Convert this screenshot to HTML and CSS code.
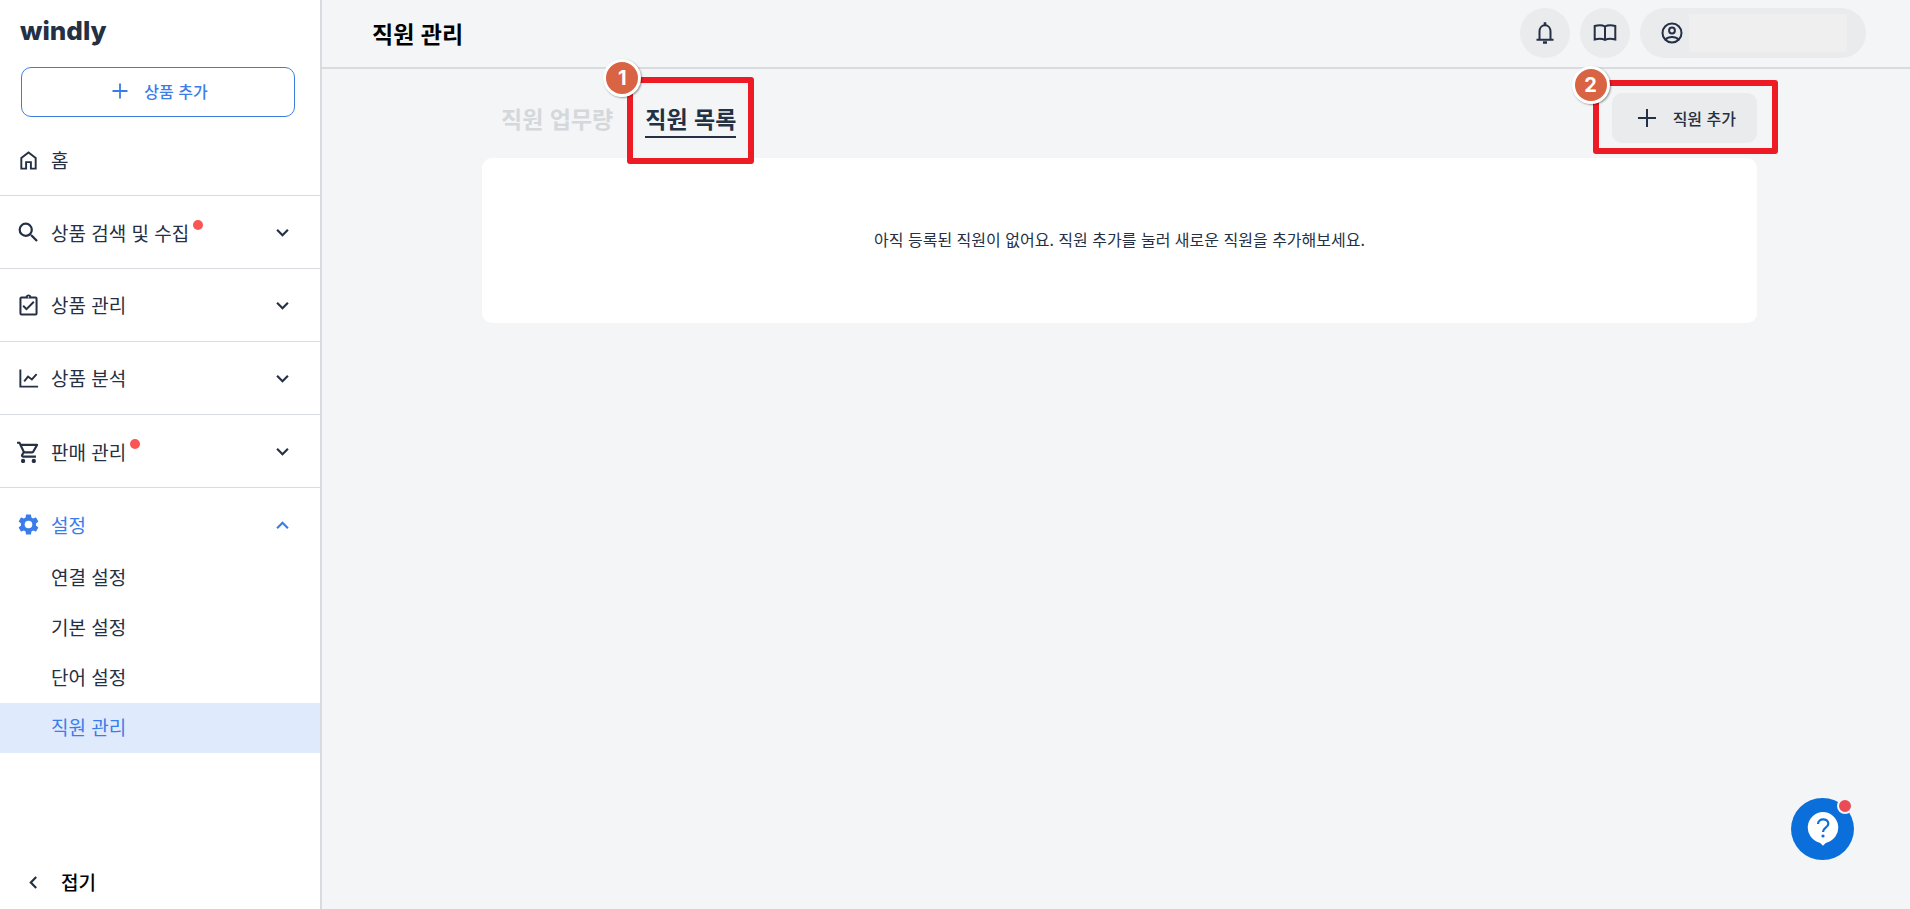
FILE: index.html
```html
<!DOCTYPE html>
<html lang="ko">
  <head>
    <meta charset="UTF-8" />
    <meta name="viewport" content="width=device-width, initial-scale=1.0" />
    <title>직원 관리</title>
    <link rel="stylesheet" href="styles.css">
  </head>
  <body>
    <div class="layout">
      <aside class="sidebar">
        <a class="logo" href="#">windly</a>
        <button class="add-product" type="button">
          <svg width="16" height="16" viewBox="0 0 16 16"><path d="M8 0.5v15M0.5 8h15" fill="none" stroke="currentColor" stroke-width="1.8" /></svg>
          상품 추가
        </button>

        <nav class="menu">
          <a class="menu-item home" href="#">
            <svg class="icon" viewBox="0 0 24 24"><path d="M4.5 20.5V9.3L12 3.6l7.5 5.7v11.2h-5v-6.8h-5v6.8z" fill="none" stroke="currentColor" stroke-width="2" /></svg>
            <span>홈</span>
          </a>
          <button class="menu-item" type="button">
            <svg class="icon" viewBox="0 0 24 24"><path d="M15.5 14h-.79l-.28-.27A6.47 6.47 0 0 0 16 9.5 6.5 6.5 0 1 0 9.5 16c1.61 0 3.09-.59 4.23-1.57l.27.28v.79l5 4.99L20.49 19zm-6 0a4.500 4.500 0 1 1 0-9 4.500 4.500 0 0 1 0 9z" transform="translate(-1.8 -1.8) scale(1.15)" /></svg>
            <span>상품 검색 및 수집<i class="new-dot"></i></span>
            <svg class="arrow" viewBox="0 0 12 12"><path d="M1 3.500l5 5 5-5" /></svg>
          </button>
          <button class="menu-item" type="button">
            <svg class="icon" viewBox="0 0 24 24"><path d="M19 3h-4.180C14.400 1.840 13.300 1 12 1s-2.400.840-2.820 2H5a2 2 0 0 0-2 2v15a2 2 0 0 0 2 2h14a2 2 0 0 0 2-2V5a2 2 0 0 0-2-2zm-7-.250a.750.750 0 1 1 0 1.500.750.750 0 0 1 0-1.500zM19 20H5V5h14zM18 9l-1.400-1.400-6.600 6.600-2.600-2.600L6 13l4 4z" transform="translate(-.6 -.6) scale(1.05)" /></svg>
            <span>상품 관리</span>
            <svg class="arrow" viewBox="0 0 12 12"><path d="M1 3.500l5 5 5-5" /></svg>
          </button>
          <button class="menu-item" type="button">
            <svg class="icon" viewBox="0 0 24 24"><path d="M3.500 2.500v18H22M7.500 15l4-5 4 3 5-5.500" fill="none" stroke="currentColor" stroke-width="2" /></svg>
            <span>상품 분석</span>
            <svg class="arrow" viewBox="0 0 12 12"><path d="M1 3.500l5 5 5-5" /></svg>
          </button>
          <button class="menu-item" type="button">
            <svg class="icon" viewBox="0 0 24 24"><path d="M15.550 13c.750 0 1.410-.410 1.750-1.030l3.580-6.490A.996.996 0 0 0 20.010 4H5.210l-.940-2H1v2h2l3.600 7.590-1.350 2.440C4.520 15.370 5.480 17 7 17h12v-2H7l1.100-2zM6.160 6h12.150l-2.760 5H8.530zM7 18a2 2 0 1 0 0 4 2 2 0 0 0 0-4zm10 0a2 2 0 1 0 0 4 2 2 0 0 0 0-4z" transform="translate(-1.5 -.5) scale(1.12)" /></svg>
            <span>판매 관리<i class="new-dot"></i></span>
            <svg class="arrow" viewBox="0 0 12 12"><path d="M1 3.500l5 5 5-5" /></svg>
          </button>
          <button class="menu-item open" type="button">
            <svg class="icon" viewBox="0 0 24 24"><path d="M19.430 12.980c.040-.320.070-.640.070-.980s-.030-.660-.070-.980l2.110-1.650c.190-.150.240-.420.120-.640l-2-3.460c-.120-.220-.390-.300-.610-.220l-2.490 1c-.520-.400-1.080-.730-1.690-.980l-.380-2.650A.488.488 0 0 0 14 2h-4c-.250 0-.460.180-.490.420l-.380 2.650c-.610.250-1.170.590-1.690.980l-2.490-1c-.230-.090-.490 0-.610.220l-2 3.460c-.130.220-.070.490.120.640l2.110 1.650c-.040.320-.070.650-.070.980s.030.660.070.980l-2.110 1.650c-.190.150-.240.420-.120.640l2 3.460c.120.220.390.300.610.220l2.490-1c.520.400 1.080.730 1.690.980l.380 2.650c.030.240.240.420.490.420h4c.250 0 .460-.180.490-.420l.380-2.650c.610-.250 1.170-.590 1.690-.980l2.490 1c.230.090.490 0 .610-.220l2-3.460c.120-.220.070-.490-.120-.640zM12 15.800a3.800 3.800 0 1 1 0-7.600 3.800 3.800 0 0 1 0 7.600z" transform="translate(-.6 -.6) scale(1.05)" /></svg>
            <span>설정</span>
            <svg class="arrow" viewBox="0 0 12 12"><path d="M1 8.500l5-5 5 5" /></svg>
          </button>
          <ul class="submenu">
            <li><a href="#">연결 설정</a></li>
            <li><a href="#">기본 설정</a></li>
            <li><a href="#">단어 설정</a></li>
            <li><a class="active" href="#">직원 관리</a></li>
          </ul>
        </nav>

        <button class="fold" type="button">
          <svg class="arrow" viewBox="0 0 12 12"><path d="M8.500 1l-5 5 5 5" /></svg>
          접기
        </button>
      </aside>

      <div class="page">
        <header class="header">
          <h1>직원 관리</h1>
          <div class="header-btns">
            <button class="round-btn" type="button" aria-label="알림">
              <svg width="24" height="24" viewBox="0 0 24 24" fill="none" stroke="currentColor" stroke-width="2"><path d="M6.500 18.500V10.500C6.500 7 8.700 4.300 12 4.300s5.500 2.700 5.500 6.200v8M3.500 18.700h17" /><path d="M12 1.300v3M10 21.500h4" stroke-width="2.600" /></svg>
            </button>
            <button class="round-btn" type="button" aria-label="가이드">
              <svg width="24" height="24" viewBox="0 0 24 24" fill="none" stroke="currentColor" stroke-width="2"><path d="M12 5.500C9.500 4 5 4 1.700 5v13.500c3.300-1 7.800-1 10.300.5 2.500-1.500 7-1.500 10.300-.5V5C19 4 14.500 4 12 5.500zv13.500" /></svg>
            </button>
            <button class="account" type="button" aria-label="내 계정">
              <svg width="22" height="22" viewBox="0 0 22 22" fill="none" stroke="currentColor" stroke-width="2"><circle cx="11" cy="11" r="9.500" /><circle cx="11" cy="8.500" r="2.900" /><path d="M4.500 17.500c3-3.400 10-3.400 13 0" /></svg>
              <span class="account-name"></span>
            </button>
          </div>
        </header>

        <main class="content">
          <div class="toolbar">
            <div class="tabs">
              <a class="tab" href="#">직원 업무량</a>
              <div class="step">
                <a class="tab current" href="#">직원 목록</a>
                <div class="mark mark-tab"><b>1</b></div>
              </div>
            </div>
            <div class="step">
              <button class="add-staff" type="button">
                <svg width="18" height="18" viewBox="0 0 18 18"><path d="M9 0v18M0 9h18" fill="none" stroke="currentColor" stroke-width="2" /></svg>
                직원 추가
              </button>
              <div class="mark mark-add"><b>2</b></div>
            </div>
          </div>
          <section class="card">
            <p>아직 등록된 직원이 없어요. 직원 추가를 눌러 새로운 직원을 추가해보세요.</p>
          </section>
        </main>
      </div>
    </div>

    <!-- help chat -->
    <button class="help" type="button" aria-label="도움말">
      <svg width="32" height="36" viewBox="0 0 32 36"><path d="M16 1a15.500 15.500 0 0 0-4 30.400c1.600.500 2.600 1.800 4 3.400 1.400-1.600 2.400-2.900 4-3.400A15.500 15.500 0 0 0 16 1z" fill="#fff" /><path d="M11 13c0-6.200 10.300-6 10.300-.300 0 4.300-5.300 3.700-5.300 8.300" fill="none" stroke="#0b6fdb" stroke-width="2.200" /><circle cx="16" cy="25" r="1.600" fill="#0b6fdb" /></svg>
      <i class="help-dot"></i>
    </button>
  </body>
</html>
```
FILE: styles.css
```css
* {
  margin: 0;
  padding: 0;
  box-sizing: border-box;
}
body {
  font-family: "Noto Sans CJK KR", sans-serif;
  font-size: 19px;
  line-height: 24px;
  color: #243044;
  background-color: #f3f5f7;
}
button {
  font: inherit;
  color: inherit;
  border: none;
  background: none;
  cursor: pointer;
}
a {
  color: inherit;
  text-decoration: none;
}
ul {
  list-style: none;
}
svg {
  flex-shrink: 0;
}
.layout {
  display: flex;
  min-height: 100vh;
}

/* sidebar */
.sidebar {
  display: flex;
  flex-direction: column;
  flex-shrink: 0;
  width: 322px;
  background-color: #fff;
  border-right: 2px solid #d8dce0;
}
.logo {
  padding: 15px 20px 20px;
  font-family: Inter, sans-serif;
  font-size: 26px;
  font-weight: 800;
  line-height: 32px;
}
.add-product {
  display: flex;
  align-items: center;
  justify-content: center;
  gap: 16px;
  height: 50px;
  margin: 0 25px 0 21px;
  padding: 0 0 2px 4px;
  border: 1px solid #3b7de0;
  border-radius: 10px;
  font-size: 16px;
  font-weight: 500;
  color: #3b7de8;
}
.menu {
  padding-top: 8px;
}
.menu-item {
  display: flex;
  align-items: center;
  gap: 11px;
  width: 100%;
  height: 73px;
  padding: 0 31px 0 17px;
  border-top: 1px solid #d8dce0;
  text-align: left;
}
.menu-item.home {
  height: 70px;
  border-top: none;
}
.menu-item.open {
  align-items: flex-start;
  height: 66px;
  padding-top: 25px;
  color: #3b7de8;
}
.menu-item span {
  flex: 1;
}
.icon {
  width: 23px;
  height: 23px;
  fill: currentColor;
}
.arrow {
  width: 13px;
  height: 13px;
  fill: none;
  stroke: currentColor;
  stroke-width: 2;
}
.open .arrow {
  margin-top: 6px;
}
.new-dot {
  display: inline-block;
  width: 10px;
  height: 10px;
  margin-left: 4px;
  border-radius: 50%;
  background-color: #fb5454;
  vertical-align: 11px;
}
.submenu a {
  display: block;
  padding: 12px 51px 14px;
}
.submenu .active {
  color: #3b7de8;
  background-color: #e0eafd;
}
.fold {
  display: flex;
  align-items: center;
  gap: 21px;
  margin-top: auto;
  padding: 15px 27px;
  font-weight: 500;
  color: #000;
}
.fold .arrow {
  color: #243044;
}

/* header */
.page {
  flex: 1;
}
.header {
  display: flex;
  align-items: center;
  justify-content: space-between;
  height: 69px;
  padding: 0 44px 2px 50px;
  border-bottom: 2px solid #d8dce0;
}
.header h1 {
  font-size: 23px;
  font-weight: 700;
  color: #000;
}
.header-btns {
  display: flex;
  gap: 10px;
}
.round-btn {
  display: flex;
  align-items: center;
  justify-content: center;
  width: 50px;
  height: 50px;
  border-radius: 50%;
  background-color: #e9ebed;
}
.account {
  display: flex;
  align-items: center;
  gap: 6px;
  height: 50px;
  padding: 0 19px 0 21px;
  border-radius: 25px;
  background-color: #e9ebed;
}
.account-name {
  width: 158px;
  height: 38px;
  background-color: #efefef;
}

/* content */
.content {
  padding: 24px 153px 0 160px;
}
.toolbar {
  display: flex;
  align-items: center;
  justify-content: space-between;
  padding: 0 0 15px 19px;
}
.tabs {
  display: flex;
  gap: 32px;
}
.tab {
  display: block;
  padding: 4px 0 2px;
  border-bottom: 2px solid transparent;
  font-size: 23px;
  font-weight: 700;
  line-height: 32px;
  color: #d5d8da;
}
.tab.current {
  color: #243044;
  border-color: #243044;
}
.step {
  position: relative;
}
.add-staff {
  display: flex;
  align-items: center;
  gap: 17px;
  height: 50px;
  padding: 0 21px 0 26px;
  border-radius: 10px;
  background-color: #e9ebed;
  font-size: 16px;
  font-weight: 500;
}
.card {
  padding: 69px 20px 72px;
  border-radius: 10px;
  background-color: #fff;
  font-size: 16px;
  text-align: center;
}

/* numbered guide marks */
.mark {
  position: absolute;
  border: 6px solid #ed1c24;
  border-radius: 3px;
  pointer-events: none;
}
.mark-tab {
  inset: -21px -18px -26px;
}
.mark-add {
  inset: -13px -21px -11px -19px;
}
.mark b {
  position: absolute;
  top: -24px;
  left: -30px;
  width: 38px;
  height: 38px;
  border: 3px solid #fff;
  border-radius: 50%;
  background-color: #d96444;
  box-shadow: 1px 1px 2px rgba(0, 0, 0, 0.4);
  font-family: Inter, sans-serif;
  font-size: 20px;
  line-height: 32px;
  color: #fff;
  text-align: center;
}
.mark-add b {
  top: -20px;
  left: -27px;
}

/* help chat */
.help {
  position: fixed;
  right: 56px;
  bottom: 49px;
  display: flex;
  align-items: center;
  justify-content: center;
  width: 63px;
  height: 62px;
  border-radius: 50%;
  background-color: #0b6fdb;
}
.help-dot {
  position: absolute;
  top: 0;
  right: 1px;
  width: 16px;
  height: 16px;
  border: 2px solid #f3f5f7;
  border-radius: 50%;
  background-color: #ea4b55;
}
```
